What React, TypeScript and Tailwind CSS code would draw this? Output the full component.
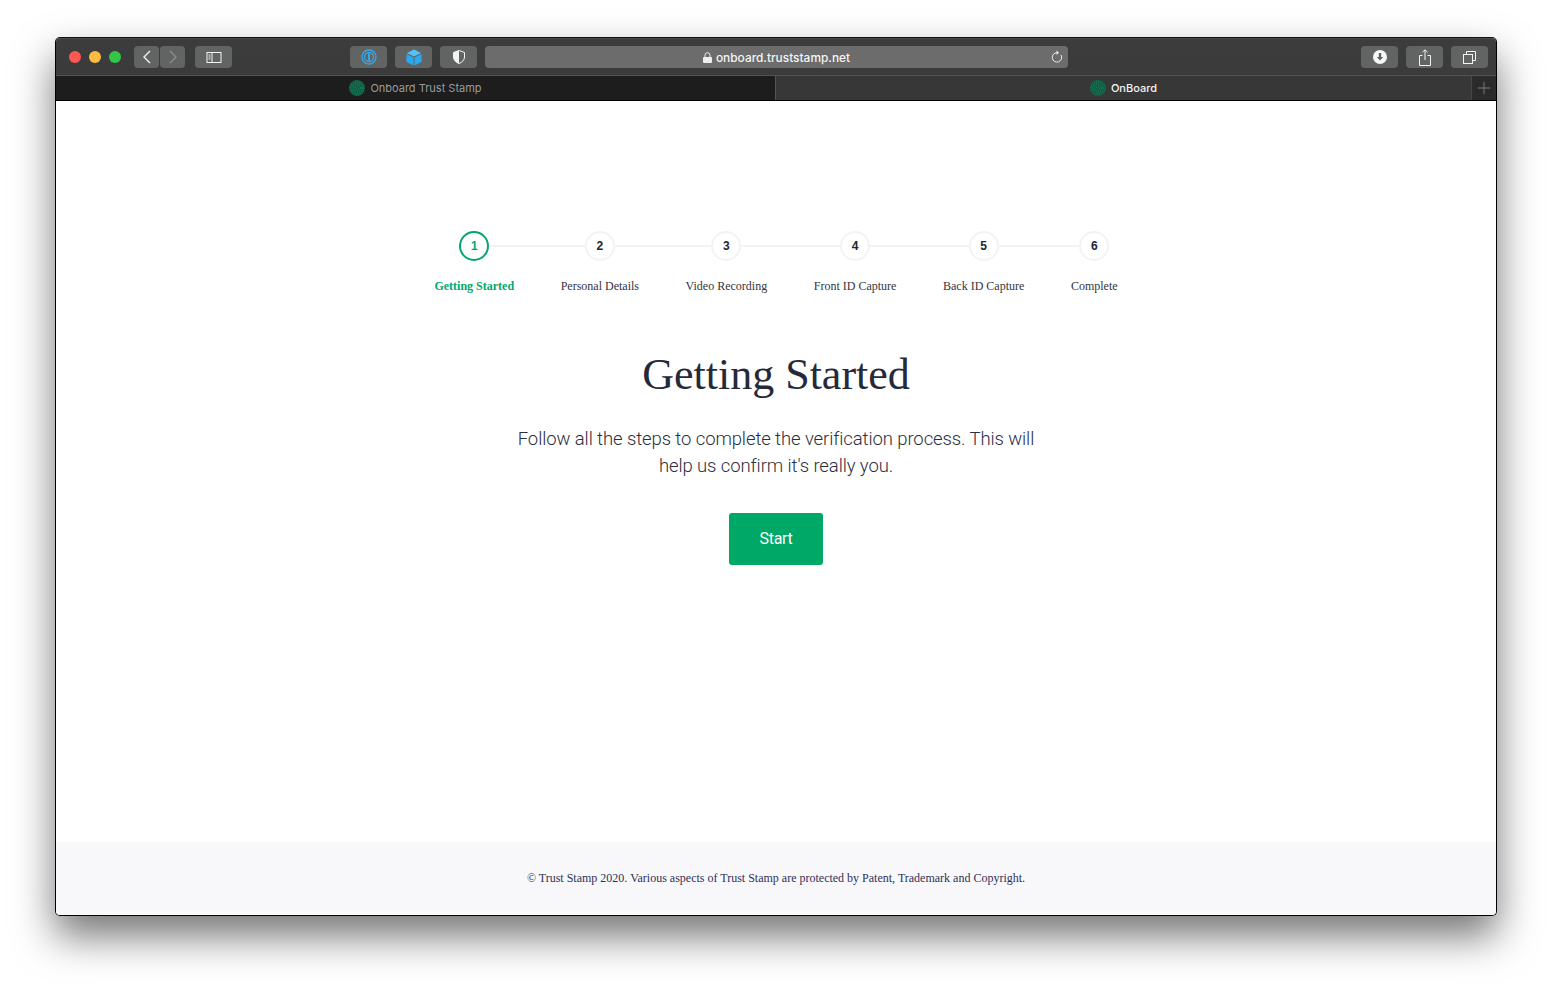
import React from "react";

const uiFont = "font-['Inter',sans-serif]";

const steps = [
  { n: 1, label: "Getting Started" },
  { n: 2, label: "Personal Details" },
  { n: 3, label: "Video Recording" },
  { n: 4, label: "Front ID Capture" },
  { n: 5, label: "Back ID Capture" },
  { n: 6, label: "Complete" },
];

const ToolButton: React.FC<{ className?: string; children?: React.ReactNode }> = ({
  className = "w-[37px]",
  children,
}) => (
  <div className={`h-[22px] rounded-[4px] bg-[#626463] flex items-center justify-center ${className}`}>
    {children}
  </div>
);

// favicon verde de Trust Stamp
const Favicon: React.FC = () => (
  <svg width="16" height="16" viewBox="0 0 16 16" className="shrink-0">
    <circle cx="8" cy="8" r="8" fill="#0f5a40" />
    <g fill="none" stroke="#2a9a70" strokeWidth="0.8" strokeDasharray="1 1.2">
      <circle cx="8" cy="8" r="7" />
      <circle cx="8" cy="8" r="5.200" />
      <circle cx="8" cy="8" r="3.400" />
      <circle cx="8" cy="8" r="1.600" />
    </g>
  </svg>
);

const Toolbar: React.FC = () => (
  <div className="h-[37px] flex items-center pl-[13px] pr-2 bg-gradient-to-b from-[#3c3c3c] to-[#3a3b3a] border-t border-[#4a4a4a]">
    <div className="flex gap-2 w-[65px]">
      <span className="size-3 rounded-full bg-[#fc5753]" />
      <span className="size-3 rounded-full bg-[#fdbc40]" />
      <span className="size-3 rounded-full bg-[#33c748]" />
    </div>
    <div className="flex gap-px">
      <ToolButton className="w-[25px]">
        <svg width="10" height="14" viewBox="0 0 10 14" fill="none" stroke="#f2f2f2" strokeWidth="1.4">
          <path d="M8 1 2 7l6 6" />
        </svg>
      </ToolButton>
      <ToolButton className="w-[25px]">
        <svg width="10" height="14" viewBox="0 0 10 14" fill="none" stroke="#8c8d8c" strokeWidth="1.4">
          <path d="m2 1 6 6-6 6" />
        </svg>
      </ToolButton>
    </div>
    <ToolButton className="w-[37px] ml-[10px]">
      <svg width="16" height="13" viewBox="0 0 16 13" fill="none" stroke="#f2f2f2" strokeWidth="1">
        <rect x="1" y="1.500" width="14" height="10" />
        <path d="M6 1.500v10M2.500 4h2M2.500 6h2M2.500 8h2" />
      </svg>
    </ToolButton>
    <div className="flex gap-2 ml-[118px]">
      <ToolButton>
        <svg width="16" height="16" viewBox="0 0 16 16" fill="none" stroke="#35a8ec">
          <circle cx="8" cy="8" r="7" strokeWidth="1.300" />
          <circle cx="8" cy="8" r="4.500" strokeWidth="1.300" />
          <path d="M8 4.500v7" strokeWidth="2" />
        </svg>
      </ToolButton>
      <ToolButton>
        <svg width="16" height="17" viewBox="0 0 16 17">
          <path d="M8 .5 15 4 8 7.500 1 4z" fill="#52c3f7" />
          <path d="M.5 5 7.500 8.500v8L.5 13z" fill="#2ba8ee" />
          <path d="M15.500 5 8.500 8.500v8l7-3.500z" fill="#2ba8ee" />
        </svg>
      </ToolButton>
      <ToolButton>
        <svg width="12" height="14" viewBox="0 0 12 14">
          <path d="M6 .5 11.500 2.500V7c0 3-2.500 5.500-5.500 6.500C3 12.500.5 10 .5 7V2.500z" fill="none" stroke="#f2f2f2" />
          <path d="M6 .5V13.500C3 12.500.5 10 .5 7V2.500z" fill="#f2f2f2" />
        </svg>
      </ToolButton>
    </div>
    <div className="ml-2 w-[583px] h-[22px] rounded-[4px] bg-[#6b6c6b] flex items-center relative">
      <div className={`mx-auto flex items-center gap-[4px] pt-px text-[11.900px] font-medium text-[#f4f4f4] ${uiFont}`}>
        <svg width="9" height="11" viewBox="0 0 9 11" fill="#eeeeee">
          <path d="M1 5h7a1 1 0 0 1 1 1v4a1 1 0 0 1-1 1H1a1 1 0 0 1-1-1V6a1 1 0 0 1 1-1z" />
          <path d="M2 5V3.200a2.500 2.500 0 0 1 5 0V5" fill="none" stroke="#eeeeee" />
        </svg>
        onboard.truststamp.net
      </div>
      <svg width="14" height="14" viewBox="0 0 14 14" fill="none" stroke="#e8e8e8" strokeWidth="1" className="absolute right-[5px] top-1">
        <path d="M8 2.700a4.700 4.700 0 1 0 4 2.300" />
        <path d="M7.500.5 10 2.700 7.500 5z" fill="#e8e8e8" stroke="none" />
      </svg>
    </div>
    <div className="ml-auto flex gap-2">
      <ToolButton>
        <svg width="14" height="14" viewBox="0 0 14 14">
          <circle cx="7" cy="7" r="7" fill="#f6f6f6" />
          <path d="M5.800 3h2.400v4h2L7 10.500 3.800 7h2z" fill="#5f6160" />
        </svg>
      </ToolButton>
      <ToolButton>
        <svg width="12" height="17" viewBox="0 0 12 17" fill="none" stroke="#f2f2f2">
          <path d="M3.500 6.500h-3v10h11v-10h-3M6 11V1M3.500 3.200 6 .8l2.500 2.400" />
        </svg>
      </ToolButton>
      <ToolButton>
        <svg width="13" height="13" viewBox="0 0 13 13" fill="none" stroke="#f2f2f2">
          <rect x=".5" y="3.500" width="9" height="9" />
          <path d="M3.500 3.500v-3h9v9h-3" />
        </svg>
      </ToolButton>
    </div>
  </div>
);

const TabBar: React.FC = () => (
  <div className={`h-[26px] flex text-[11px] border-t border-[#525252] border-b border-b-black bg-[#363736] ${uiFont}`}>
    <div className="w-[719px] bg-[#1c1d1c] text-[#9a9a9a] flex items-center justify-center gap-[5px]">
      <Favicon />
      Onboard Trust Stamp
    </div>
    <div className="flex-1 border-l border-[#545554] text-[#f2f2f2] flex items-center justify-center gap-[5px] font-medium">
      <Favicon />
      OnBoard
    </div>
    <div className="w-[25px] bg-[#2a2b2a] border-l border-[#454645] flex items-center justify-center">
      <svg width="12" height="12" viewBox="0 0 12 12" stroke="#777877" strokeWidth="1">
        <path d="M6 0v12M0 6h12" />
      </svg>
    </div>
  </div>
);

const Stepper: React.FC = () => (
  <div className="relative mx-auto w-fit flex gap-[46.600px]">
    <div className="absolute left-10 right-6 top-[14px] h-0.5 bg-[#f3f3f4]" />
    {steps.map((step) => {
      const active = step.n === 1;
      return (
        <div key={step.n} className="relative flex flex-col items-center">
          <div
            className={`size-[30px] rounded-full bg-white border-2 flex items-center justify-center text-[12px] font-bold font-['Liberation_Sans',sans-serif] ${
              active ? "border-[#00a86b] text-[#00a86b]" : "border-[#f3f3f4] text-[#22242f]"
            }`}
          >
            {step.n}
          </div>
          <span
            className={`mt-[17px] text-[12px] leading-[16px] whitespace-nowrap ${
              active ? "font-bold text-[#00a86b]" : "text-[#33353f]"
            }`}
          >
            {step.label}
          </span>
        </div>
      );
    })}
  </div>
);

export default function App() {
  return (
    <div className="h-[989px] bg-white pt-[37px] pl-[55px] overflow-hidden">
      <div className="w-[1442px] h-[879px] flex flex-col rounded-[5px] overflow-hidden border border-black border-t-[#111] bg-white shadow-[0_20px_40px_rgba(0,0,0,0.55)] font-['Liberation_Serif',serif]">
        <Toolbar />
        <TabBar />
        <main className="flex-1 flex flex-col items-center pt-[130px]">
          <Stepper />
          <h1 className="mt-[53px] text-[44px] leading-[56px] font-normal text-[#262a38]">Getting Started</h1>
          <p className="mt-[23px] w-[530px] text-center text-[18.500px] tracking-[-0.1px] leading-[27px] font-light text-[#2b2e40] font-['Roboto',sans-serif]">
            Follow all the steps to complete the verification process. This will help us confirm it's really you.
          </p>
          <button className="mt-[33px] w-[94px] h-[52px] rounded-[3px] bg-[#00a868] text-white text-[16px] font-normal tracking-[-0.3px] font-['Roboto',sans-serif]">
            Start
          </button>
        </main>
        <footer className="h-[73px] pb-0.5 bg-[#f8f8fb] flex items-center justify-center text-[12px] text-[#2e3156]">
          © Trust Stamp 2020. Various aspects of Trust Stamp are protected by Patent, Trademark and Copyright.
        </footer>
      </div>
    </div>
  );
}
